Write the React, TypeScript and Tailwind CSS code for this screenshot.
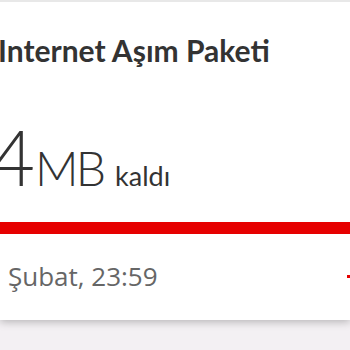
export default function App() {
  return (
    <div className="w-[350px] h-[350px] overflow-hidden bg-[#f3f0f3] font-['Lato','Open_Sans',sans-serif]">
      <div className="h-[320px] bg-white flex flex-col shadow-[0_2px_8px_rgba(0,0,0,0.25)] relative">
        <div className="h-[2px] bg-[#e8e8e8]" />
        <h2 className="mt-[30px] -ml-[2px] text-[30px] leading-[36px] font-bold text-[#333]">
          Internet Aşım Paketi
        </h2>
        <div className="mt-[51px] -ml-[9px] flex items-baseline text-[#333] leading-none">
          <span className="text-[76px] font-light">4</span>
          <span className="text-[48px] font-light tracking-[-3px]">MB</span>
          <span className="ml-[12px] text-[27px] font-normal">kaldı</span>
        </div>
        <div className="mt-[27px] h-[12px] bg-[#e60000]" />
        <div className="mt-[23px] pl-[8px] flex items-center justify-between text-[26px] text-[#666] font-['Open_Sans',sans-serif]">
          <span>Şubat, 23:59</span>
          <span className="w-[6px] h-[3px] bg-[#e60000] -mr-[3px]" />
        </div>
      </div>
    </div>
  );
}
